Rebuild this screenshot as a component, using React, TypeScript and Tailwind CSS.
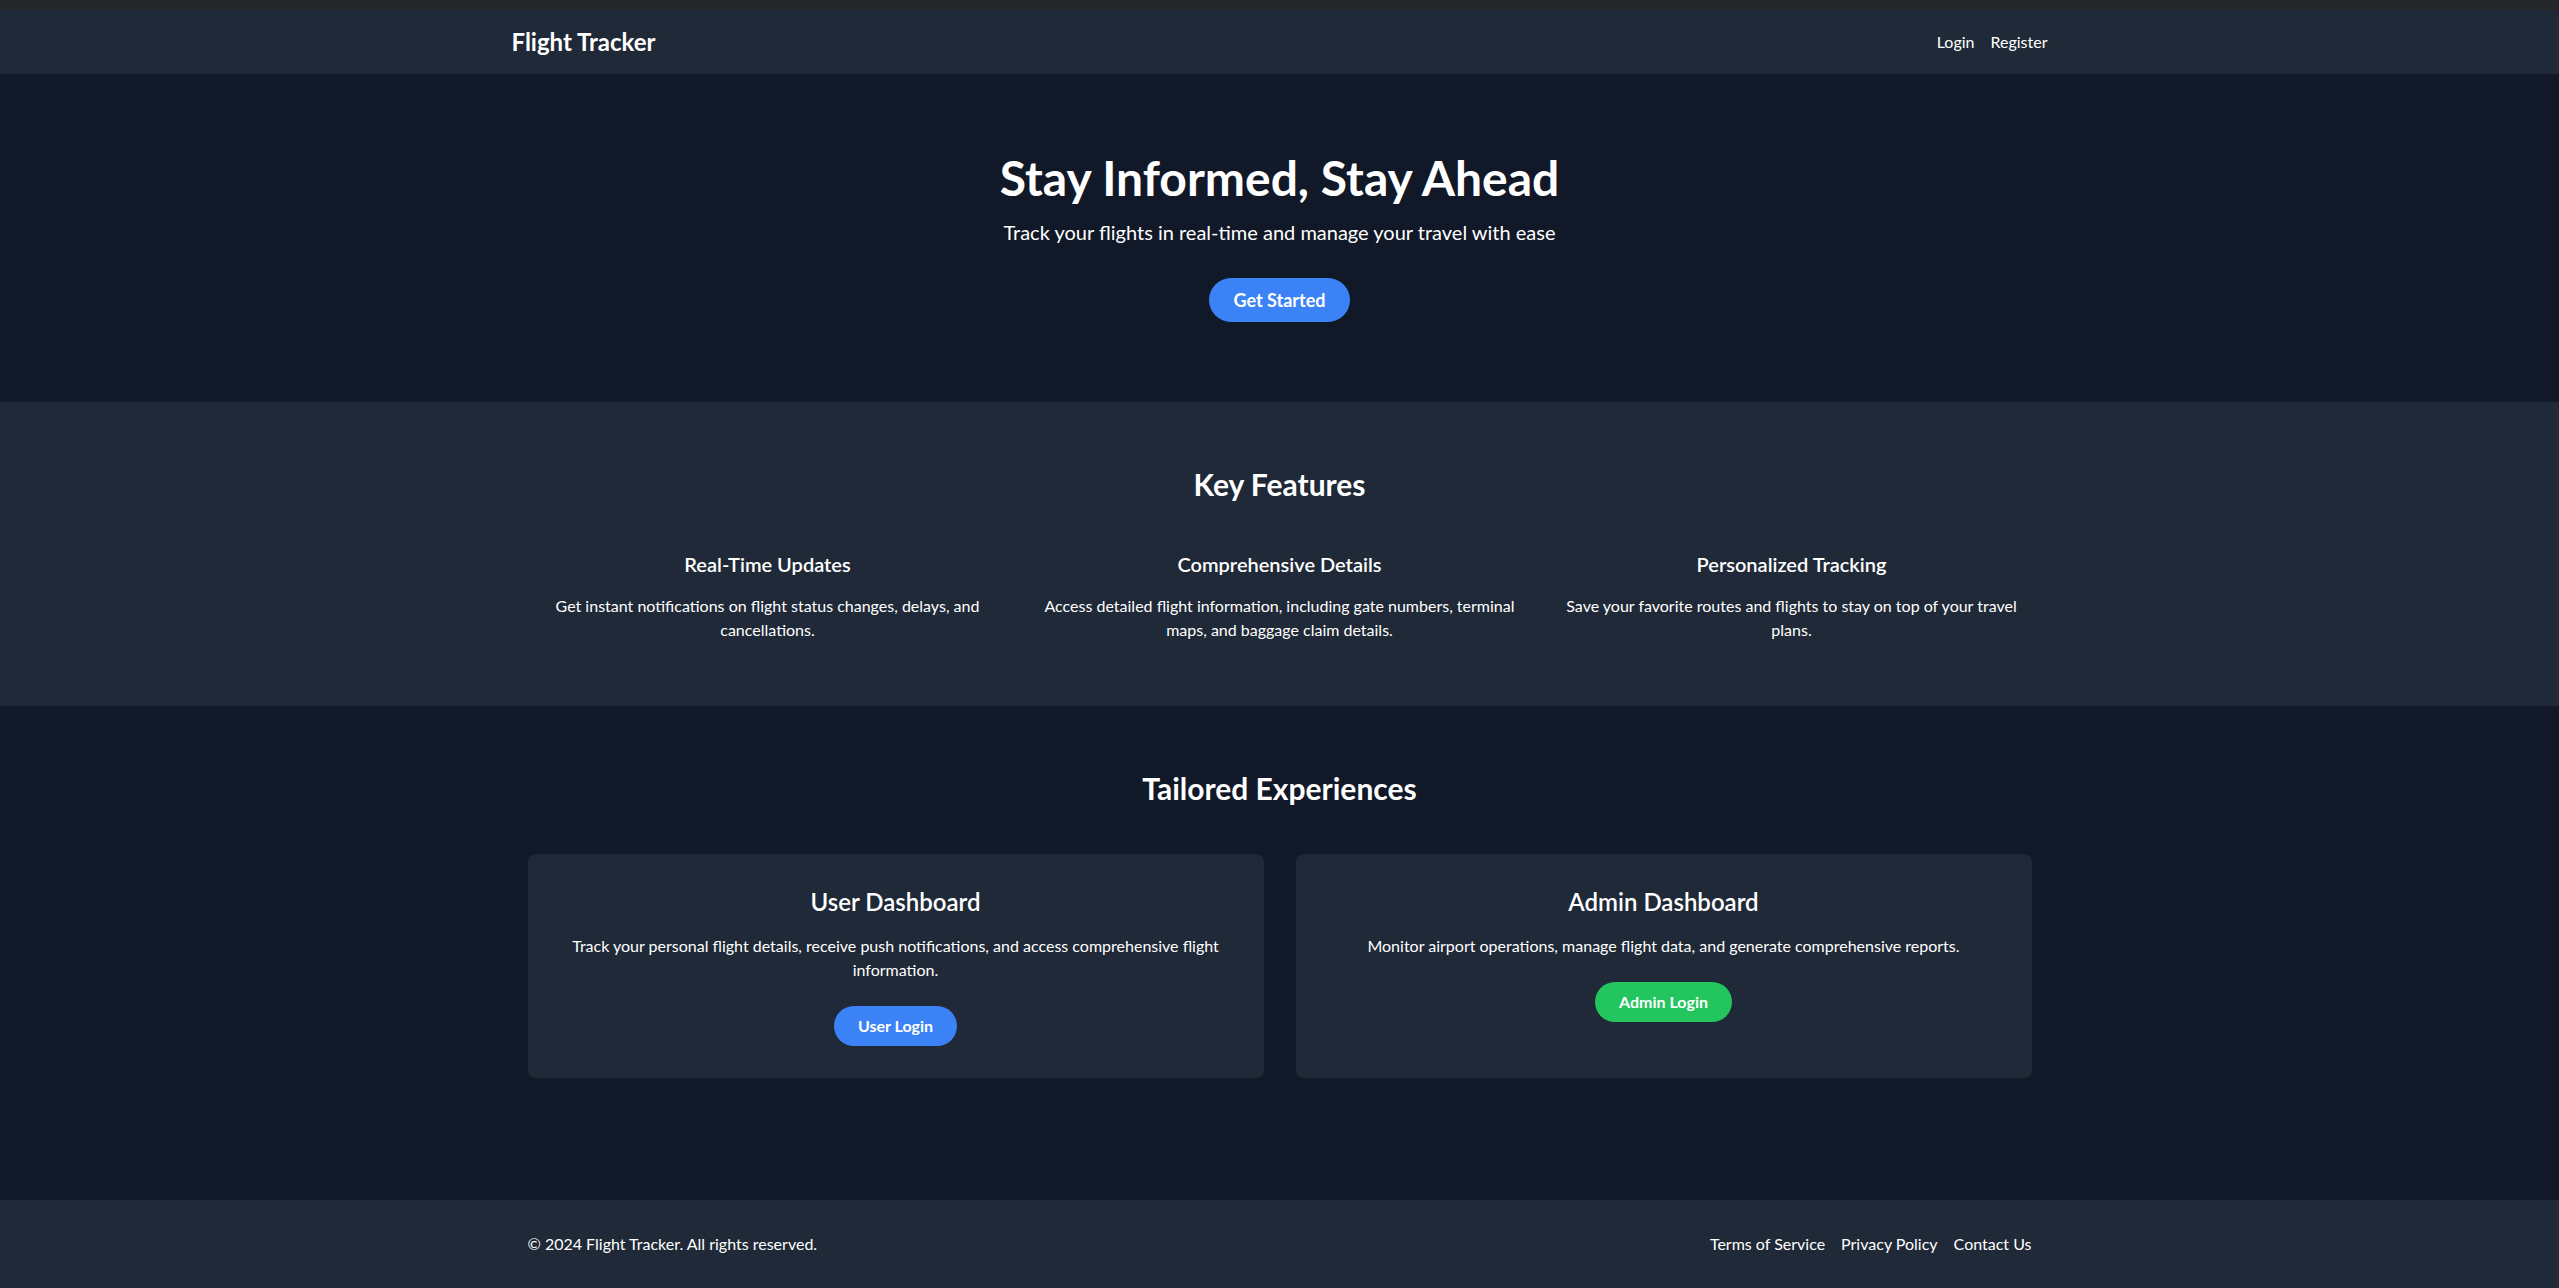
import React from 'react';

const FEATURES = [
  {
    title: 'Real-Time Updates',
    text: 'Get instant notifications on flight status changes, delays, and cancellations.',
  },
  {
    title: 'Comprehensive Details',
    text: 'Access detailed flight information, including gate numbers, terminal maps, and baggage claim details.',
  },
  {
    title: 'Personalized Tracking',
    text: 'Save your favorite routes and flights to stay on top of your travel plans.',
  },
];

const App: React.FC = () => {
  return (
    <div className="min-h-screen flex flex-col bg-[#111827] text-white font-['Segoe_UI',Lato,'Liberation_Sans',sans-serif]">
      <div className="h-[10px] bg-[#23272a]"></div>

      {/* Header */}
      <header className="bg-[#1f2937]">
        <nav className="container mx-auto flex justify-between items-center py-4">
          <h1 className="text-2xl font-bold">Flight Tracker</h1>
          <div className="flex space-x-4">
            <a href="#" className="text-base">Login</a>
            <a href="#" className="text-base">Register</a>
          </div>
        </nav>
      </header>

      <main className="flex-grow">
        {/* Hero */}
        <section className="py-20 text-center">
          <div className="container mx-auto px-4">
            <h2 className="text-5xl font-bold mb-4">Stay Informed, Stay Ahead</h2>
            <p className="text-xl mb-8">Track your flights in real-time and manage your travel with ease</p>
            <button className="bg-[#3b82f6] text-white text-lg font-bold py-2 px-6 rounded-full">
              Get Started
            </button>
          </div>
        </section>

        {/* Key features */}
        <section className="bg-[#1f2937] py-16">
          <div className="container mx-auto px-4">
            <h2 className="text-3xl font-bold text-center mb-12">Key Features</h2>
            <div className="grid grid-cols-3 gap-8">
              {FEATURES.map(f => (
                <div key={f.title} className="text-center">
                  <h3 className="text-xl font-semibold mb-4">{f.title}</h3>
                  <p className="text-base">{f.text}</p>
                </div>
              ))}
            </div>
          </div>
        </section>

        {/* Dashboards */}
        <section className="py-16">
          <div className="container mx-auto px-4">
            <h2 className="text-3xl font-bold text-center mb-12">Tailored Experiences</h2>
            <div className="grid grid-cols-2 gap-8">
              <div className="bg-[#1f2937] rounded-lg p-8 text-center">
                <h3 className="text-2xl font-semibold mb-4">User Dashboard</h3>
                <p className="text-base mb-6">
                  Track your personal flight details, receive push notifications, and access comprehensive flight information.
                </p>
                <button className="bg-[#3b82f6] text-white font-bold py-2 px-6 rounded-full">User Login</button>
              </div>
              <div className="bg-[#1f2937] rounded-lg p-8 text-center">
                <h3 className="text-2xl font-semibold mb-4">Admin Dashboard</h3>
                <p className="text-base mb-6">
                  Monitor airport operations, manage flight data, and generate comprehensive reports.
                </p>
                <button className="bg-[#22c55e] text-white font-bold py-2 px-6 rounded-full">Admin Login</button>
              </div>
            </div>
          </div>
        </section>
      </main>

      {/* Footer */}
      <footer className="bg-[#1f2937] py-8">
        <div className="container mx-auto px-4 flex justify-between items-center">
          <p className="text-base">&copy; 2024 Flight Tracker. All rights reserved.</p>
          <div className="flex space-x-4">
            <a href="#" className="text-base">Terms of Service</a>
            <a href="#" className="text-base">Privacy Policy</a>
            <a href="#" className="text-base">Contact Us</a>
          </div>
        </div>
      </footer>
    </div>
  );
};

export default App;
